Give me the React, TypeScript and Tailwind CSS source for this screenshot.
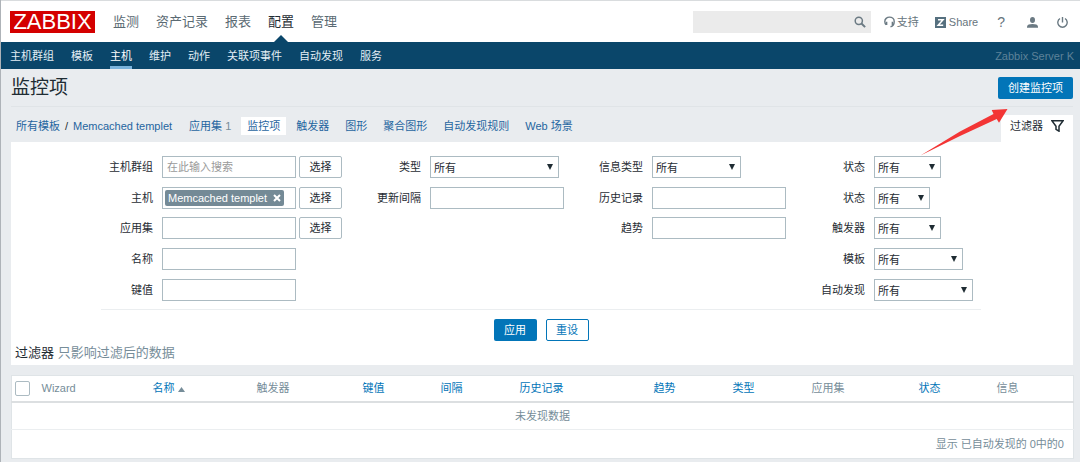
import React from "react";
import clsx from "clsx";

const mainMenu = ["监测", "资产记录", "报表", "配置", "管理"];
const subMenu = ["主机群组", "模板", "主机", "维护", "动作", "关联项事件", "自动发现", "服务"];
const tabs = ["监控项", "触发器", "图形", "聚合图形", "自动发现规则", "Web 场景"];

const columns = [
  { label: "Wizard", width: 111 },
  { label: "名称", width: 104, sortable: true, sorted: true },
  { label: "触发器", width: 106 },
  { label: "键值", width: 78, sortable: true },
  { label: "间隔", width: 79, sortable: true },
  { label: "历史记录", width: 134, sortable: true },
  { label: "趋势", width: 79, sortable: true },
  { label: "类型", width: 79, sortable: true },
  { label: "应用集", width: 107 },
  { label: "状态", width: 78, sortable: true },
  { label: "信息", width: 80 },
];

const fieldClass = "h-[22px] w-[134px] border border-[#acbbc2] bg-white px-1 outline-none";

function FilterColumn({ children }: { children: React.ReactNode }) {
  return (
    <div className="grid h-[153px] grid-cols-[44px_auto] grid-rows-5 items-center gap-x-[9px]">
      {children}
    </div>
  );
}

function Field({ id, label, children }: { id: string; label: string; children: React.ReactNode }) {
  return (
    <>
      <label htmlFor={id} className="text-right whitespace-nowrap">
        {label}
      </label>
      <div className="flex gap-[3px]">{children}</div>
    </>
  );
}

function Select({ id, className }: { id: string; className: string }) {
  return (
    <div className={clsx("relative", className)}>
      <select
        id={id}
        className="block h-[22px] w-full appearance-none border border-[#acbbc2] bg-white pt-0.5 pl-[3px] outline-none"
      >
        <option>所有</option>
      </select>
      <svg
        viewBox="0 0 6 6"
        className="pointer-events-none absolute top-2 right-1.5 size-1.5 fill-[#1f2c33]"
      >
        <path d="M0 0h6L3 6z" />
      </svg>
    </div>
  );
}

function PickButton() {
  return (
    <button type="button" className="h-[22px] w-[43px] rounded-xs border border-[#acbbc2] bg-white">
      选择
    </button>
  );
}

function Header() {
  return (
    <header className="border-t border-[#d9dcde] bg-white pt-px">
      <div className="flex h-10 items-center pr-3 pl-[9px]">
        <a
          href="#"
          className="flex h-[22px] w-[85px] items-center justify-center bg-[#d40000] text-[22px] leading-none text-white"
        >
          ZABBIX
        </a>
        <nav className="ml-[18px] flex h-full gap-[17px] text-[13px] text-[#5a6a73]">
          {mainMenu.map((item) => (
            <a
              key={item}
              href="#"
              className={clsx("relative flex h-full items-center", item === "配置" && "text-[#1f2c33]")}
            >
              {item}
              {item === "配置" && (
                <svg viewBox="0 0 14 7" className="absolute bottom-0 left-1.5 h-[7px] w-3.5 fill-[#0a466a]">
                  <path d="M7 0l7 7H0z" />
                </svg>
              )}
            </a>
          ))}
        </nav>
        <div className="ml-auto flex items-center text-[#67757d]">
          <div className="relative mr-[13px]">
            <input
              type="search"
              aria-label="搜索"
              className="block h-[22px] w-[178px] bg-[#ebebeb] pr-6 pl-2 outline-none"
            />
            <button type="button" aria-label="搜索" className="absolute top-[5px] right-[5px]">
              <svg viewBox="0 0 12 12" className="size-3 fill-none stroke-[#6b7a83]">
                <circle cx="4.8" cy="4.8" r="3.6" strokeWidth="1.5" />
                <path d="M7.5 7.5l3.6 3.6" strokeWidth="2" />
              </svg>
            </button>
          </div>
          <a href="#" className="mr-4 flex items-center gap-0.5">
            <svg viewBox="0 0 11 12" className="h-3 w-[11px] fill-none stroke-[#6b7a83]">
              <path d="M2.2 8.6C1 7.8.8 6.5.8 5.400a4.700 4.300 0 0 1 9.400 0c0 2-.8 4.600-3.700 5.300" strokeWidth="1.4" />
              <path d="M2.600 5.700v3.400M8.400 5.700v3.400" strokeWidth="1.500" />
            </svg>
            支持
          </a>
          <a href="#" className="mr-[19px] flex items-center gap-[3px]">
            <svg viewBox="0 0 11 11" className="size-[11px]">
              <path d="M0 0h11v11H0z" fill="#56707f" />
              <path d="M3 2.800h5L3.200 8.200H8.200" fill="none" stroke="#fff" strokeWidth="1.500" />
            </svg>
            Share
          </a>
          <a href="#" aria-label="帮助" className="mr-[22px] text-sm leading-none">
            ?
          </a>
          <a href="#" aria-label="用户" className="mr-[19px]">
            <svg viewBox="0 0 11 11" className="size-[11px] fill-[#6b7a83]">
              <ellipse cx="5.500" cy="3" rx="2.500" ry="3" />
              <path d="M0 10.800V9.500C0 7.800 2.500 7 5.500 7S11 7.800 11 9.500v1.300z" />
            </svg>
          </a>
          <a href="#" aria-label="退出">
            <svg viewBox="0 0 11 11" className="size-[11px] fill-none stroke-[#6b7a83]" strokeWidth="1.400">
              <path d="M3 1.500a4.700 4.700 0 1 0 5 0M5.500 0v5.500" />
            </svg>
          </a>
        </div>
      </div>
      <div className="flex h-[27px] items-center justify-between bg-[#0a466a] pr-1.5 pl-[9px]">
        <nav className="flex h-full gap-[17px] text-[#e3eef5]">
          {subMenu.map((item) => (
            <a
              key={item}
              href="#"
              className={clsx(
                "flex items-center border-y-3 border-transparent",
                item === "主机" && "border-b-[#7bb3dc] text-white"
              )}
            >
              {item}
            </a>
          ))}
        </nav>
        <span className="text-[#5d8299]">Zabbix Server K</span>
      </div>
    </header>
  );
}

function Filter() {
  return (
    <form className="bg-white pt-2.5 pr-1.5 pb-1 pl-1">
      <div className="flex flex-col items-center">
        <div className="flex gap-[35px] border-b border-[#ebeef0] px-2 pb-1">
          <FilterColumn>
            <Field id="groups" label="主机群组">
              <input id="groups" placeholder="在此输入搜索" className={clsx(fieldClass, "placeholder:text-[#9a9a9a]")} />
              <PickButton />
            </Field>
            <Field id="hosts" label="主机">
              <div className="flex h-[22px] w-[134px] items-center border border-[#acbbc2] px-0.5">
                <span className="flex h-4 items-center gap-1.5 rounded-xs bg-[#748a96] px-[3px] whitespace-nowrap text-white">
                  Memcached templet
                  <button type="button" aria-label="移除">
                    <svg viewBox="0 0 8 8" className="size-2 stroke-white" strokeWidth="2">
                      <path d="M1 1l6 6M7 1L1 7" />
                    </svg>
                  </button>
                </span>
                <input id="hosts" className="w-0 min-w-0 flex-1 outline-none" />
              </div>
              <PickButton />
            </Field>
            <Field id="application" label="应用集">
              <input id="application" className={fieldClass} />
              <PickButton />
            </Field>
            <Field id="name" label="名称">
              <input id="name" className={fieldClass} />
            </Field>
            <Field id="key" label="键值">
              <input id="key" className={fieldClass} />
            </Field>
          </FilterColumn>
          <FilterColumn>
            <Field id="type" label="类型">
              <Select id="type" className="w-[129px]" />
            </Field>
            <Field id="delay" label="更新间隔">
              <input id="delay" className={fieldClass} />
            </Field>
          </FilterColumn>
          <FilterColumn>
            <Field id="value-type" label="信息类型">
              <Select id="value-type" className="w-[89px]" />
            </Field>
            <Field id="history" label="历史记录">
              <input id="history" className={fieldClass} />
            </Field>
            <Field id="trends" label="趋势">
              <input id="trends" className={fieldClass} />
            </Field>
          </FilterColumn>
          <FilterColumn>
            <Field id="state" label="状态">
              <Select id="state" className="w-[67px]" />
            </Field>
            <Field id="status" label="状态">
              <Select id="status" className="w-14" />
            </Field>
            <Field id="with-triggers" label="触发器">
              <Select id="with-triggers" className="w-[67px]" />
            </Field>
            <Field id="template" label="模板">
              <Select id="template" className="w-[89px]" />
            </Field>
            <Field id="discovery" label="自动发现">
              <Select id="discovery" className="w-[99px]" />
            </Field>
          </FilterColumn>
        </div>
        <div className="flex gap-[9px] pt-[9px]">
          <button type="button" className="h-[22px] w-[43px] rounded-xs bg-[#0275b8] text-white">
            应用
          </button>
          <button
            type="button"
            className="h-[22px] w-[43px] rounded-xs border border-[#0275b8] bg-white text-[#0275b8]"
          >
            重设
          </button>
        </div>
      </div>
      <p className="pt-1 text-[13px] leading-4 text-[#768d99]">
        <span className="text-[#1f2c33]">过滤器</span> 只影响过滤后的数据
      </p>
    </form>
  );
}

function ItemsTable() {
  return (
    <table className="w-full table-fixed border-collapse border border-[#dfe4e7] bg-white text-[#768d99]">
      <colgroup>
        <col style={{ width: 27 }} />
        {columns.map((column) => (
          <col key={column.label} style={{ width: column.width }} />
        ))}
      </colgroup>
      <thead>
        <tr className="h-[26px] border-b-2 border-[#dcdfe1]">
          <th className="pl-[3px]">
            <input
              type="checkbox"
              aria-label="全选"
              className="block size-[15px] appearance-none rounded-xs border border-[#acbbc2] bg-white"
            />
          </th>
          {columns.map((column) => (
            <th key={column.label} className="pl-[3px] text-left font-normal whitespace-nowrap">
              {column.sortable ? (
                <a href="#" className="text-[#0275b8]">
                  {column.label}
                  {column.sorted && (
                    <svg viewBox="0 0 7 5" className="ml-[3px] inline h-[5px] w-[7px] fill-[#768d99]">
                      <path d="M3.500 0L7 5H0z" />
                    </svg>
                  )}
                </a>
              ) : (
                column.label
              )}
            </th>
          ))}
        </tr>
      </thead>
      <tbody>
        <tr className="h-7 border-b border-[#ebeef0]">
          <td colSpan={12} className="text-center">
            未发现数据
          </td>
        </tr>
        <tr className="h-[29px]">
          <td colSpan={12} className="pr-[9px] text-right">
            显示 已自动发现的 0中的0
          </td>
        </tr>
      </tbody>
    </table>
  );
}

export default function App() {
  return (
    <div className="min-h-screen border-l border-[#aeb3b8] bg-[#e9ecef] font-['Liberation_Sans','Noto_Sans_CJK_SC',sans-serif] text-[11px] leading-4 text-[#1f2c33]">
      <Header />
      <main className="relative pr-[7px] pb-[3px] pl-2.5">
        <div className="flex h-[38px] items-center justify-between border-b border-[#e0e4e7]">
          <h1 className="text-[19px] leading-6">监控项</h1>
          <button type="button" className="h-[22px] w-[75px] rounded-xs bg-[#0275b8] text-white">
            创建监控项
          </button>
        </div>
        <div className="flex h-[35px] items-end justify-between">
          <nav className="flex items-center pb-[7px] pl-[5px] text-[#1f65a0]">
            <a href="#">所有模板</a>
            <span className="px-[5px] text-[#1f2c33]">/</span>
            <a href="#">Memcached templet</a>
            <a href="#" className="mr-2.5 ml-[17px]">
              应用集 <span className="text-[#768d99]">1</span>
            </a>
            <div className="flex gap-1">
              {tabs.map((tab) => (
                <a
                  key={tab}
                  href="#"
                  className={clsx("flex h-[18px] items-center px-1.5", tab === "监控项" && "bg-white")}
                >
                  {tab}
                </a>
              ))}
            </div>
          </nav>
          <button type="button" className="flex h-[27px] items-center gap-2 bg-white pr-[9px] pb-1.5 pl-[9px]">
            过滤器
            <svg viewBox="0 0 13 12" className="h-3 w-[13px] fill-none stroke-[#1f2c33]" strokeWidth="1.500">
              <path d="M.9.8h11.200L8 6.200v5L5 9.400V6.200z" />
            </svg>
          </button>
        </div>
        <Filter />
        <div className="pt-2.5">
          <ItemsTable />
        </div>
        <svg viewBox="0 0 88 48" className="pointer-events-none absolute top-[39px] right-[72px] h-12 w-[88px] fill-[#f33535]">
          <path d="M.5 47.500L40 23.500 73.500 6 71.700 2 87.500 1 79 14.700 76.700 11 40 28z" />
        </svg>
      </main>
    </div>
  );
}
